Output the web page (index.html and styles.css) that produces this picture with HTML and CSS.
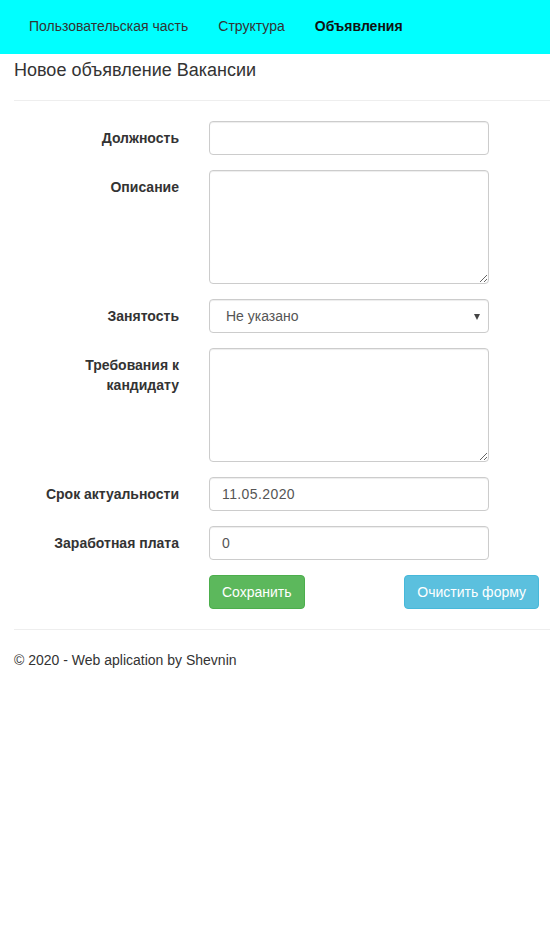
FILE: index.html
```html
<!DOCTYPE html>
<html lang="ru">
<head>
<meta charset="utf-8">
<title>Новое объявление Вакансии</title>
<link rel="stylesheet" href="styles.css">
</head>
<body>
<nav class="navbar">
  <ul class="nav">
    <li><a href="#">Пользовательская часть</a></li>
    <li><a href="#">Структура</a></li>
    <li><a href="#" class="active">Объявления</a></li>
  </ul>
</nav>
<div class="container">
  <h4 class="title">Новое объявление Вакансии</h4>
  <hr class="rule">
  <form class="form">
    <label class="lbl" for="f1">Должность</label>
    <div class="ctl"><input id="f1" class="input" type="text"></div>

    <label class="lbl" for="f2">Описание</label>
    <div class="ctl"><textarea id="f2" class="input area"></textarea></div>

    <label class="lbl" for="f3">Занятость</label>
    <div class="ctl"><div class="select-wrap"><select id="f3" class="input select"><option>Не указано</option></select></div></div>

    <label class="lbl" for="f4">Требования к кандидату</label>
    <div class="ctl"><textarea id="f4" class="input area"></textarea></div>

    <label class="lbl" for="f5">Срок актуальности</label>
    <div class="ctl"><input id="f5" class="input date" type="text" value="11.05.2020"></div>

    <label class="lbl" for="f6">Заработная плата</label>
    <div class="ctl"><input id="f6" class="input" type="text" value="0"></div>

    <div class="buttons">
      <button type="button" class="btn btn-success">Сохранить</button>
      <button type="button" class="btn btn-info">Очистить форму</button>
    </div>
  </form>
  <hr class="rule">
  <footer class="footer"><p>© 2020 - Web aplication by Shevnin</p></footer>
</div>
</body>
</html>
```

FILE: styles.css
```css
* { box-sizing: border-box; }
html, body { margin: 0; padding: 0; background: #fff; }
body {
  font-family: "Liberation Sans", Arial, sans-serif;
  font-size: 14px;
  line-height: 20px;
  color: #333;
}
.navbar {
  background: #00ffff;
  height: 54px;
}
.nav {
  list-style: none;
  margin: 0;
  padding: 0 0 0 14px;
  display: flex;
}
.nav a {
  display: block;
  padding: 16px 15px 18px;
  color: #333;
  text-decoration: none;
}
.nav a.active { font-weight: bold; color: #111; }
.container { padding-left: 14px; }
.title {
  margin: 6px 0 0;
  font-size: 18px;
  font-weight: normal;
  line-height: 20px;
  color: #333;
}
.rule {
  margin: 20px 0;
  border: 0;
  border-top: 1px solid #eee;
  height: 0;
}
.form {
  display: grid;
  grid-template-columns: 150px 330px;
  column-gap: 30px;
  row-gap: 15px;
  padding-left: 15px;
}
.lbl {
  text-align: right;
  font-weight: bold;
  padding-top: 7px;
}
.ctl { width: 280px; }
.input {
  display: block;
  width: 280px;
  height: 34px;
  padding: 6px 12px;
  font-family: inherit;
  font-size: 14px;
  line-height: 20px;
  color: #555;
  background: #fff;
  border: 1px solid #ccc;
  border-radius: 4px;
  box-shadow: inset 0 1px 1px rgba(0,0,0,.075);
  margin: 0;
}
.date { letter-spacing: 0.4px; }
.area { height: 114px; resize: vertical; }
.select-wrap { position: relative; }
.select {
  appearance: none;
  -webkit-appearance: none;
  padding-left: 16px;
}
.select-wrap::after {
  content: "";
  position: absolute;
  right: 9px;
  top: 15px;
  border-left: 3.5px solid transparent;
  border-right: 3.5px solid transparent;
  border-top: 6px solid #444;
}
.buttons {
  grid-column: 2;
  display: flex;
  justify-content: space-between;
}
.btn {
  height: 34px;
  padding: 6px 12px;
  font-family: inherit;
  font-size: 14px;
  line-height: 20px;
  color: #fff;
  border-radius: 4px;
  border: 1px solid transparent;
  cursor: pointer;
}
.btn-success { background: #5cb85c; border-color: #4cae4c; }
.btn-info { background: #5bc0de; border-color: #46b8da; }
.footer p { margin: 0; }
```
